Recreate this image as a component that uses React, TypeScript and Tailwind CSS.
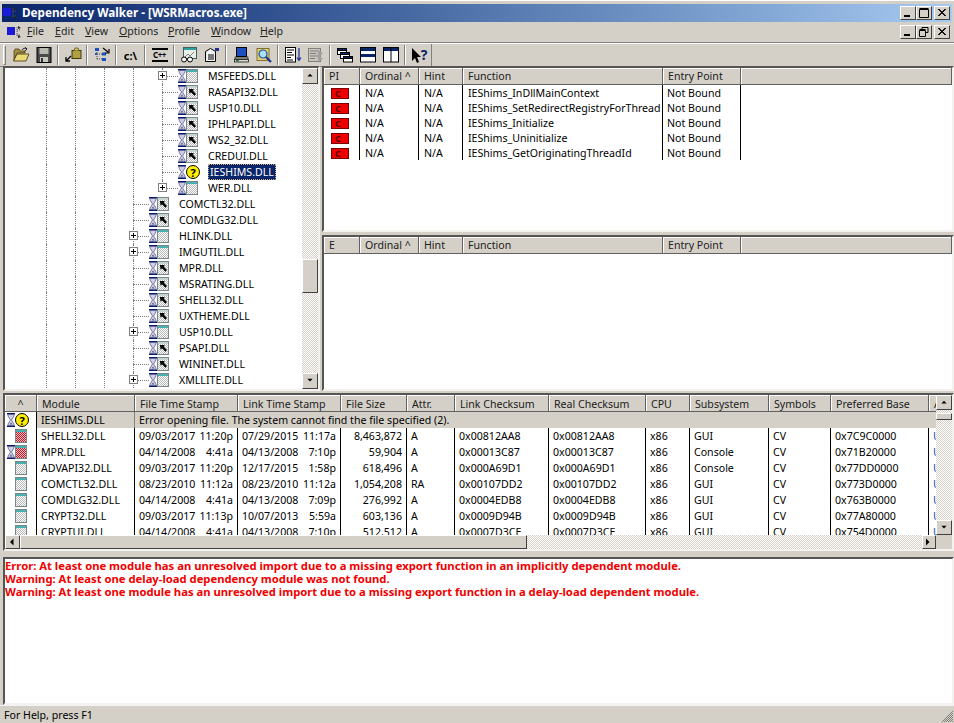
import React from "react";

const FACE = "bg-[#d4d0c8]";
const RAISED = "border border-t-white border-l-white border-r-[#404040] border-b-[#404040] bg-[#d4d0c8]";
const SUNKEN = "border-2 border-t-[#555555] border-l-[#555555] border-r-[#f4f2ee] border-b-[#f4f2ee] bg-white";
const DITHER = "bg-[repeating-conic-gradient(#d4d0c8_0_25%,#ffffff_0_50%)] bg-[length:2px_2px]";

function Hourglass() {
  return (
    <svg width="8" height="14" viewBox="0 0 8 14" className="shrink-0">
      <rect x="0" y="0" width="8" height="1.500" fill="#0a1a6a" />
      <rect x="0" y="12.500" width="8" height="1.500" fill="#0a1a6a" />
      <path d="M1 1.500h6v1.500L4.500 7 7 11v1.500H1V11l2.500-4L1 3z" fill="#d0d0e0" stroke="#4a4a88" strokeWidth="0.700" />
      <path d="M2.500 11.500h3L4 9.500z" fill="#5a5a90" />
    </svg>
  );
}

function ModuleIcon({ kind }: { kind: "plain" | "arrow" | "red" }) {
  const body = kind === "red" ? "url(#dr)" : "url(#dg)";
  return (
    <svg width="12" height="14" viewBox="0 0 12 14" className="shrink-0">
      <defs>
        <pattern id="dg" width="2" height="2" patternUnits="userSpaceOnUse">
          <rect width="2" height="2" fill="#ffffff" />
          <rect width="1" height="1" fill="#b8b8b8" />
          <rect x="1" y="1" width="1" height="1" fill="#b8b8b8" />
        </pattern>
        <pattern id="dr" width="2" height="2" patternUnits="userSpaceOnUse">
          <rect width="2" height="2" fill="#f4c0c0" />
          <rect width="1" height="1" fill="#c01828" />
          <rect x="1" y="1" width="1" height="1" fill="#c01828" />
        </pattern>
      </defs>
      <rect x="0.500" y="0.500" width="11" height="13" fill={body} stroke="#788888" />
      <rect x="1" y="1" width="10" height="2" fill={kind === "arrow" ? "#c8d4d4" : "#48b0b0"} />
      {kind === "arrow" && <path d="M3 4h5L6.700 5.400 10 9l-1.600 1.800L5 7.200 3.500 8.800z" fill="#000" />}
    </svg>
  );
}

function Question() {
  return (
    <span className="w-[14px] h-[14px] shrink-0 rounded-full bg-[#ffee00] border border-black flex items-center justify-center text-[11px] font-bold leading-none text-black">?</span>
  );
}

function Tri({ dir }: { dir: "up" | "down" | "left" | "right" }) {
  const d = { up: "M0.500 4.500 4 1l3.500 3.500z", down: "M0.500 1 4 4.500 7.500 1z", left: "M4.500 0.500 1 4l3.500 3.500z", right: "M1 0.500 4.500 4 1 7.500z" }[dir];
  return (
    <svg width="8" height="8" viewBox="0 0 8 8" className={dir === "up" || dir === "down" ? "h-[6px]" : ""}>
      <path d={d} fill="#000" />
    </svg>
  );
}

function Btn({ dir, cls }: { dir: "up" | "down" | "left" | "right"; cls: string }) {
  return <div className={`${RAISED} ${cls} shrink-0 flex items-center justify-center`}><Tri dir={dir} /></div>;
}

type TreeRow = { name: string; depth: 0 | 1; plus?: boolean; icon: "plain" | "arrow" | "q"; sel?: boolean; last?: boolean };
const tree: TreeRow[] = [
  { name: "MSFEEDS.DLL", depth: 1, plus: true, icon: "plain" },
  { name: "RASAPI32.DLL", depth: 1, icon: "arrow" },
  { name: "USP10.DLL", depth: 1, icon: "arrow" },
  { name: "IPHLPAPI.DLL", depth: 1, icon: "arrow" },
  { name: "WS2_32.DLL", depth: 1, icon: "arrow" },
  { name: "CREDUI.DLL", depth: 1, icon: "arrow" },
  { name: "IESHIMS.DLL", depth: 1, icon: "q", sel: true },
  { name: "WER.DLL", depth: 1, plus: true, icon: "plain", last: true },
  { name: "COMCTL32.DLL", depth: 0, icon: "arrow" },
  { name: "COMDLG32.DLL", depth: 0, icon: "arrow" },
  { name: "HLINK.DLL", depth: 0, plus: true, icon: "plain" },
  { name: "IMGUTIL.DLL", depth: 0, plus: true, icon: "plain" },
  { name: "MPR.DLL", depth: 0, icon: "arrow" },
  { name: "MSRATING.DLL", depth: 0, icon: "arrow" },
  { name: "SHELL32.DLL", depth: 0, icon: "arrow" },
  { name: "UXTHEME.DLL", depth: 0, icon: "arrow" },
  { name: "USP10.DLL", depth: 0, plus: true, icon: "plain" },
  { name: "PSAPI.DLL", depth: 0, icon: "arrow" },
  { name: "WININET.DLL", depth: 0, icon: "arrow" },
  { name: "XMLLITE.DLL", depth: 0, plus: true, icon: "plain" },
];

function Guide() {
  return <div className="w-[29px] h-4 shrink-0 border-l border-dotted border-[#808080]" />;
}

function TreeLine({ r }: { r: TreeRow }) {
  return (
    <div className="h-4 flex items-center pl-[41px] whitespace-nowrap">
      <Guide /><Guide /><Guide />
      {r.depth === 1 && <Guide />}
      <div className="relative w-[16px] h-4 shrink-0">
        <div className={`absolute left-0 top-0 border-l border-dotted border-[#808080] ${r.last ? "h-2" : "h-4"}`} />
        <div className="absolute left-0 top-2 w-[16px] border-t border-dotted border-[#808080]" />
        {r.plus && (
          <div className="absolute left-[-4px] top-[3px] w-[9px] h-[9px] border border-[#808080] bg-white flex items-center justify-center">
            <svg width="7" height="7" viewBox="0 0 7 7"><path d="M1 3.500h5M3.500 1v5" stroke="#000" /></svg>
          </div>
        )}
      </div>
      <Hourglass />
      {r.icon === "q" ? <Question /> : <ModuleIcon kind={r.icon} />}
      <span className={`ml-[8px] px-[2px] h-4 leading-[16px] ${r.sel ? "bg-[#0a246a] text-white outline-1 outline-dotted outline-[#c8b070] outline-offset-[-1px]" : "text-black"}`}>{r.name}</span>
    </div>
  );
}

function HeadCell({ w, lead, children }: { w: string; lead?: string; children?: React.ReactNode }) {
  return (
    <div className={`${w} h-full shrink-0 px-[5px] ${lead ?? "leading-[16px]"} border-r border-b border-[#606060] shadow-[inset_1px_1px_0_#ffffff] overflow-hidden whitespace-nowrap text-[#202020]`}>{children}</div>
  );
}

const W_TOP = ["w-[36px]", "w-[59px]", "w-[44px]", "w-[200px]", "w-[78px]"];
const imports = [
  "IEShims_InDllMainContext",
  "IEShims_SetRedirectRegistryForThread",
  "IEShims_Initialize",
  "IEShims_Uninitialize",
  "IEShims_GetOriginatingThreadId",
];

function FuncHeader({ first }: { first: string }) {
  return (
    <div className={`h-[17px] flex ${FACE}`}>
      <HeadCell w={W_TOP[0]}>{first}</HeadCell>
      <HeadCell w={W_TOP[1]}>{"Ordinal ^"}</HeadCell>
      <HeadCell w={W_TOP[2]}>Hint</HeadCell>
      <HeadCell w={W_TOP[3]}>Function</HeadCell>
      <HeadCell w={W_TOP[4]}>Entry Point</HeadCell>
      <HeadCell w="flex-1" />
    </div>
  );
}

function FuncRow({ fn }: { fn: string }) {
  const c = "h-[15px] shrink-0 border-r border-black px-[5px] leading-[17px] whitespace-nowrap overflow-hidden";
  return (
    <div className="flex h-[15px]">
      <div className={`h-[15px] shrink-0 border-r border-black pl-[7px] pt-[1px] flex items-center ${W_TOP[0]}`}>
        <span className="w-[18px] h-[11px] bg-[#ee0000] border border-[#7a0000] text-[9px] leading-[9px] font-bold text-[#5a0000] pl-[3px] overflow-hidden">C</span>
      </div>
      <div className={`${c} ${W_TOP[1]}`}>N/A</div>
      <div className={`${c} ${W_TOP[2]}`}>N/A</div>
      <div className={`${c} ${W_TOP[3]}`}>{fn}</div>
      <div className={`${c} ${W_TOP[4]} pl-[4px]`}>Not Bound</div>
    </div>
  );
}

const W_MOD = ["w-[32px]", "w-[98px]", "w-[103px]", "w-[103px]", "w-[66px]", "w-[48px]", "w-[94px]", "w-[97px]", "w-[44px]", "w-[79px]", "w-[62px]", "w-[98px]", "w-[7px]"];
const modHead = ["Module", "File Time Stamp", "Link Time Stamp", "File Size", "Attr.", "Link Checksum", "Real Checksum", "CPU", "Subsystem", "Symbols", "Preferred Base", "A"];

type Mod = { hg?: boolean; kind: "plain" | "red"; v: string[] };
const mods: Mod[] = [
  { kind: "red", v: ["SHELL32.DLL", "09/03/2017", "11:20p", "07/29/2015", "11:17a", "8,463,872", "A", "0x00812AA8", "0x00812AA8", "x86", "GUI", "CV", "0x7C9C0000"] },
  { hg: true, kind: "red", v: ["MPR.DLL", "04/14/2008", "4:41a", "04/13/2008", "7:10p", "59,904", "A", "0x00013C87", "0x00013C87", "x86", "Console", "CV", "0x71B20000"] },
  { kind: "plain", v: ["ADVAPI32.DLL", "09/03/2017", "11:20p", "12/17/2015", "1:58p", "618,496", "A", "0x000A69D1", "0x000A69D1", "x86", "Console", "CV", "0x77DD0000"] },
  { kind: "plain", v: ["COMCTL32.DLL", "08/23/2010", "11:12a", "08/23/2010", "11:12a", "1,054,208", "RA", "0x00107DD2", "0x00107DD2", "x86", "GUI", "CV", "0x773D0000"] },
  { kind: "plain", v: ["COMDLG32.DLL", "04/14/2008", "4:41a", "04/13/2008", "7:09p", "276,992", "A", "0x0004EDB8", "0x0004EDB8", "x86", "GUI", "CV", "0x763B0000"] },
  { kind: "plain", v: ["CRYPT32.DLL", "09/03/2017", "11:13p", "10/07/2013", "5:59a", "603,136", "A", "0x0009D94B", "0x0009D94B", "x86", "GUI", "CV", "0x77A80000"] },
  { kind: "plain", v: ["CRYPTUI.DLL", "04/14/2008", "4:41a", "04/13/2008", "7:10p", "512,512", "A", "0x0007D3CE", "0x0007D3CE", "x86", "GUI", "CV", "0x754D0000"] },
];

function ModRow({ m }: { m: Mod }) {
  const c = "h-4 shrink-0 border-r border-black px-[4px] leading-[16px] whitespace-nowrap overflow-hidden";
  const [name, d1, t1, d2, t2, size, attr, lc, rc, cpu, sub, sym, base] = m.v;
  return (
    <div className="flex h-4">
      <div className={`h-4 shrink-0 border-r border-black pl-[2px] flex items-center ${W_MOD[0]}`}>
        <div className="w-[8px] shrink-0">{m.hg && <Hourglass />}</div>
        <ModuleIcon kind={m.kind} />
      </div>
      <div className={`${c} ${W_MOD[1]}`}>{name}</div>
      <div className={`${c} ${W_MOD[2]} flex justify-between`}><span>{d1}</span><span>{t1}</span></div>
      <div className={`${c} ${W_MOD[3]} flex justify-between`}><span>{d2}</span><span>{t2}</span></div>
      <div className={`${c} ${W_MOD[4]} text-right`}>{size}</div>
      <div className={`${c} ${W_MOD[5]}`}>{attr}</div>
      <div className={`${c} ${W_MOD[6]}`}>{lc}</div>
      <div className={`${c} ${W_MOD[7]}`}>{rc}</div>
      <div className={`${c} ${W_MOD[8]}`}>{cpu}</div>
      <div className={`${c} ${W_MOD[9]}`}>{sub}</div>
      <div className={`${c} ${W_MOD[10]}`}>{sym}</div>
      <div className={`${c} ${W_MOD[11]}`}>{base}</div>
      <div className={`h-4 shrink-0 pl-[4px] leading-[16px] overflow-hidden text-[#1a56b0] ${W_MOD[12]}`}>U</div>
    </div>
  );
}

function WinBtn({ children }: { children: React.ReactNode }) {
  return <div className={`w-[16px] h-[14px] ${RAISED} flex items-center justify-center`}>{children}</div>;
}
const MinG = () => <svg width="10" height="10" viewBox="0 0 10 10"><rect x="1" y="7" width="6" height="2" fill="#000" /></svg>;
const MaxG = () => <svg width="10" height="10" viewBox="0 0 10 10"><path d="M0.500 1.500h9v8h-9zM0.500 0.500h9" fill="none" stroke="#000" /></svg>;
const RestG = () => <svg width="10" height="10" viewBox="0 0 10 10"><path d="M3 2.500V0.500h6v5H7M0.500 3.500h6v6h-6zM0.500 2.500h6M2.500 0.500" fill="none" stroke="#000" /></svg>;
const CloseG = () => <svg width="10" height="10" viewBox="0 0 10 10"><path d="M1 1l7 7M2 1l7 7M8 1L1 8M9 1L2 8" stroke="#000" strokeWidth="0.900" /></svg>;

function AppIcon({ cls }: { cls: string }) {
  return (
    <svg width="15" height="14" viewBox="0 0 15 14" className={cls}>
      <rect x="0" y="2" width="8" height="8" fill="#1a1ad8" />
      <path d="M10 2v9M10 5h3M10 10h3" stroke="#555" strokeDasharray="1 1" fill="none" />
      <path d="M11 1l3 2-3 1zM11 10l3 2-3 1z" fill="#222" />
    </svg>
  );
}

const I = ({ children }: { children: React.ReactNode }) => (
  <svg width="18" height="16" viewBox="0 0 18 16">{children}</svg>
);

function TBtn({ children }: { children: React.ReactNode }) {
  return <div className="w-[23px] h-full shrink-0 flex items-center justify-center">{children}</div>;
}
function TSep() {
  return <div className="w-[6px] h-[20px] shrink-0 flex justify-center"><div className="w-[2px] h-full border-l border-l-[#808080] border-r border-r-white" /></div>;
}
function WinIcon({ kind }: { kind: "casc" | "h" | "v" }) {
  return (
    <I>
      {kind === "casc" && (
        <g stroke="#000" fill="#fff">
          <rect x="1.500" y="1.500" width="9" height="6" />
          <rect x="4.500" y="5.500" width="9" height="6" />
          <rect x="7.500" y="9.500" width="9" height="5.500" />
          <rect x="1.500" y="1.500" width="9" height="2" fill="#0a246a" />
          <rect x="4.500" y="5.500" width="9" height="2" fill="#0a246a" />
          <rect x="7.500" y="9.500" width="9" height="2" fill="#0a246a" />
        </g>
      )}
      {kind === "h" && (
        <g>
          <rect x="1.500" y="0.500" width="15" height="14.500" fill="#fff" stroke="#000" />
          <rect x="2" y="1" width="14" height="3" fill="#0a246a" />
          <rect x="2" y="7" width="14" height="3" fill="#0a246a" />
        </g>
      )}
      {kind === "v" && (
        <g>
          <rect x="1.500" y="0.500" width="15" height="14.500" fill="#fff" stroke="#000" />
          <rect x="2" y="1" width="14" height="3" fill="#0a246a" />
          <path d="M9 1v14" stroke="#000" />
        </g>
      )}
    </I>
  );
}

function Toolbar() {
  return (
    <div className="flex items-center h-[23px] w-[432px] pl-[3px] border-r border-b border-r-[#808080] border-b-[#808080]">
      <div className="w-[3px] h-[20px] shrink-0 border-l border-t border-white border-r border-b border-r-[#808080] border-b-[#808080]" />
      <div className="w-[3px] shrink-0" />
      <TBtn>
        <I>
          <path d="M2 4l1-2h4l1 2h5v2H5L2 13z" fill="#a89040" stroke="#403000" strokeWidth="0.700" />
          <path d="M5 7h12l-3 7H1.500z" fill="#e8d878" stroke="#403000" strokeWidth="0.800" />
          <path d="M10 3c1-2 3-2 5-1M13 0l2 2-2 2" stroke="#000" fill="none" strokeWidth="0.800" />
        </I>
      </TBtn>
      <TBtn>
        <I>
          <rect x="2" y="0.500" width="14" height="15" fill="#4a4a4a" stroke="#000" />
          <rect x="4.500" y="1" width="9" height="6" fill="#b8b8b0" />
          <rect x="5" y="10" width="8" height="5" fill="#c8c8c0" />
          <rect x="6" y="11" width="2" height="4" fill="#333" />
        </I>
      </TBtn>
      <TSep />
      <TBtn>
        <I>
          <rect x="8" y="3.500" width="9" height="8" fill="#b0a040" stroke="#403810" />
          <path d="M10 3.500l1-2.500h3l1 2.500" fill="#d8c860" stroke="#403810" strokeWidth="0.700" />
          <path d="M7 9L2 14M2 10v4h4" stroke="#000" fill="none" strokeWidth="1.300" />
        </I>
      </TBtn>
      <TSep />
      <TBtn>
        <I>
          <path d="M4 3v10M4 7h5M4 12h5" stroke="#444" strokeDasharray="1 1" fill="none" />
          <rect x="2" y="1" width="4" height="3" fill="#1c50c0" />
          <rect x="9" y="5.500" width="4" height="3" fill="#1c50c0" />
          <rect x="2" y="6" width="2" height="2" fill="#1c50c0" />
          <rect x="9" y="11" width="4" height="3" fill="#1c50c0" />
          <path d="M10 1l5 4M16 2v4h-4" stroke="#000" fill="none" strokeWidth="1.200" />
        </I>
      </TBtn>
      <TSep />
      <TBtn><span className="font-['DejaVu_Sans',sans-serif] font-bold text-[11px] text-black leading-none">c:\</span></TBtn>
      <TSep />
      <TBtn>
        <span className="w-[16px] border-t-2 border-b-2 border-black text-[8px] leading-[10px] font-bold text-center text-black font-['Liberation_Serif',serif] tracking-[-0.5px]">C++</span>
      </TBtn>
      <TSep />
      <TBtn>
        <I>
          <rect x="3.500" y="0.500" width="13" height="11" fill="#e8f0e8" stroke="#406060" />
          <rect x="4" y="1" width="12" height="2" fill="#30a0a0" />
          <path d="M5 10l3-3 2 2 4-4" stroke="#808080" fill="none" />
          <circle cx="4" cy="12.500" r="2.500" fill="#fff" stroke="#000" />
          <circle cx="10" cy="12.500" r="2.500" fill="#fff" stroke="#000" />
          <path d="M6.500 12.500h1" stroke="#000" />
        </I>
      </TBtn>
      <TBtn>
        <I>
          <path d="M2.500 4.500l5-3 5 3v10h-10z" fill="#f0f0f0" stroke="#000" />
          <path d="M5 8h6M5 10h6M5 12h6" stroke="#000" />
          <path d="M12 1h4v3h-4z" fill="#1c3090" />
        </I>
      </TBtn>
      <TSep />
      <TBtn>
        <I>
          <rect x="4.500" y="0.500" width="10" height="9" fill="#1c50c0" stroke="#000" />
          <rect x="3" y="10" width="13" height="2" fill="#b0b0a8" stroke="#000" strokeWidth="0.600" />
          <rect x="2.500" y="12.500" width="14" height="2.500" fill="#d8d8c8" stroke="#000" strokeWidth="0.700" />
          <rect x="4" y="13" width="3" height="1.500" fill="#208040" />
        </I>
      </TBtn>
      <TBtn>
        <I>
          <rect x="2" y="1.500" width="12" height="12" fill="#e8d070" stroke="#807030" />
          <circle cx="8" cy="7" r="4" fill="#a8e0f8" stroke="#1c50a0" strokeWidth="1.200" />
          <path d="M11 10l5 5" stroke="#1c3090" strokeWidth="2.200" />
        </I>
      </TBtn>
      <TSep />
      <TBtn>
        <I>
          <rect x="1.500" y="0.500" width="10" height="14.500" fill="#fff" stroke="#000" />
          <path d="M3 3h7M3 5.500h5M3 8h7M3 10.500h4M3 13h6" stroke="#000" />
          <path d="M15 1v12M13 10.500l2 3 2-3" stroke="#1c3090" fill="none" strokeWidth="1.200" />
        </I>
      </TBtn>
      <TBtn>
        <I>
          <rect x="1.500" y="1.500" width="12" height="13" fill="#c8c4bc" stroke="#808080" />
          <path d="M3 4h8M3 6.500h6M3 9h8M3 11.500h5" stroke="#808080" />
          <path d="M11 3l5 3-3 3 3 3-5 2z" fill="#a0a0a0" />
        </I>
      </TBtn>
      <TSep />
      <TBtn><WinIcon kind="casc" /></TBtn>
      <TBtn><WinIcon kind="h" /></TBtn>
      <TBtn><WinIcon kind="v" /></TBtn>
      <TSep />
      <TBtn>
        <div className="flex items-center">
          <svg width="9" height="15" viewBox="0 0 9 15"><path d="M0 0v13l3-3 2 5 2-1-2-5h4z" fill="#000" /></svg>
          <span className="font-['DejaVu_Sans',sans-serif] font-bold text-[14px] leading-none text-[#0a246a]">?</span>
        </div>
      </TBtn>
    </div>
  );
}

const menu = [
  ["F", "ile", "w-[28px]"],
  ["E", "dit", "w-[30px]"],
  ["V", "iew", "w-[34px]"],
  ["O", "ptions", "w-[49px]"],
  ["P", "rofile", "w-[43px]"],
  ["W", "indow", "w-[49px]"],
  ["H", "elp", "w-[40px]"],
];

export default function App() {
  return (
    <div className={`w-[954px] h-[723px] overflow-hidden flex flex-col ${FACE} font-['Noto_Sans','DejaVu_Sans',sans-serif] text-[10.6px] text-black`}>
      <div className="h-[4px] shrink-0 border-t border-white" />

      <div className="h-[18px] shrink-0 mx-[2px] flex items-center bg-gradient-to-r from-[#0a246a] to-[#a6caf0]">
        <AppIcon cls="ml-[1px] shrink-0" />
        <span className="ml-[4px] font-bold text-[11.7px] text-white whitespace-nowrap">Dependency Walker - [WSRMacros.exe]</span>
        <div className="ml-auto flex mr-[2px]">
          <WinBtn><MinG /></WinBtn>
          <WinBtn><MaxG /></WinBtn>
          <div className="w-[2px]" />
          <WinBtn><CloseG /></WinBtn>
        </div>
      </div>

      <div className="h-[21px] shrink-0 flex items-center border-b border-[#808080] pl-[7px]">
        <AppIcon cls="shrink-0 mr-[5px]" />
        {menu.map(([u, rest, w]) => (
          <span key={u} className={`${w} shrink-0 text-[#222222]`}><span className="underline">{u}</span>{rest}</span>
        ))}
        <div className="ml-auto flex mr-[4px]">
          <WinBtn><MinG /></WinBtn>
          <WinBtn><RestG /></WinBtn>
          <div className="w-[2px]" />
          <WinBtn><CloseG /></WinBtn>
        </div>
      </div>

      <div className="h-[23px] shrink-0 border-t border-white"><Toolbar /></div>

      <div className="h-[325px] shrink-0 flex pl-[3px]">
        <div className={`w-[317px] shrink-0 flex ${SUNKEN}`}>
          <div className="flex-1 min-w-0 overflow-hidden">
            {tree.map((r, i) => <TreeLine key={i} r={r} />)}
          </div>
          <div className={`w-[16px] shrink-0 flex flex-col ${DITHER}`}>
            <Btn dir="up" cls="h-[16px]" />
            <div className="h-[175px] shrink-0" />
            <div className={`h-[34px] shrink-0 ${RAISED}`} />
            <div className="flex-1" />
            <Btn dir="down" cls="h-[16px]" />
          </div>
        </div>
        <div className="w-[632px] ml-[2px] flex flex-col">
          <div className={`h-[166px] shrink-0 overflow-hidden ${SUNKEN}`}>
            <FuncHeader first="PI" />
            <div>{imports.map((f) => <FuncRow key={f} fn={f} />)}</div>
          </div>
          <div className={`h-[156px] mt-[3px] shrink-0 overflow-hidden ${SUNKEN}`}>
            <FuncHeader first="E" />
          </div>
        </div>
      </div>

      <div className={`h-[158px] mt-[2px] ml-[3px] w-[951px] shrink-0 flex flex-col ${SUNKEN}`}>
        <div className="h-[140px] shrink-0 flex">
          <div className="flex-1 min-w-0 overflow-hidden">
            <div className={`h-[17px] flex ${FACE}`}>
              <div className={`${W_MOD[0]} h-full shrink-0 text-center leading-[18px] border-r border-b border-[#606060] shadow-[inset_1px_1px_0_#ffffff] text-[#202020]`}>^</div>
              {modHead.map((h, i) => (
                <HeadCell key={h} w={W_MOD[i + 1]} lead="leading-[18px]">{h}</HeadCell>
              ))}
            </div>
            <div className={`h-4 flex ${FACE}`}>
              <div className={`h-4 shrink-0 pl-[2px] flex items-center bg-white border-r border-black ${W_MOD[0]}`}>
                <Hourglass />
                <Question />
              </div>
              <div className={`h-4 shrink-0 px-[4px] leading-[16px] border-r border-[#808080] ${W_MOD[1]}`}>IESHIMS.DLL</div>
              <div className="h-4 flex-1 px-[4px] leading-[16px] whitespace-nowrap">Error opening file. The system cannot find the file specified (2).</div>
            </div>
            {mods.map((m) => <ModRow key={m.v[0]} m={m} />)}
          </div>
          <div className={`w-[16px] shrink-0 flex flex-col ${DITHER}`}>
            <Btn dir="up" cls="h-[15px]" />
            <div className="h-[3px] shrink-0" />
            <div className={`h-[7px] shrink-0 ${RAISED}`} />
            <div className="flex-1" />
            <Btn dir="down" cls="h-[15px]" />
          </div>
        </div>
        <div className={`h-[14px] shrink-0 flex ${FACE}`}>
          <div className={`flex-1 flex ${DITHER}`}>
            <Btn dir="left" cls="w-[15px]" />
            <div className={`w-[507px] shrink-0 ${RAISED}`} />
            <div className="flex-1" />
            <Btn dir="right" cls="w-[14px]" />
          </div>
          <div className="w-[16px] shrink-0" />
        </div>
      </div>

      <div className={`h-[148px] mt-[6px] ml-[3px] w-[951px] shrink-0 font-bold text-[11.25px] text-[#f00000] leading-[13px] whitespace-nowrap overflow-hidden ${SUNKEN}`}>
        <div>Error: At least one module has an unresolved import due to a missing export function in an implicitly dependent module.</div>
        <div>Warning: At least one delay-load dependency module was not found.</div>
        <div>Warning: At least one module has an unresolved import due to a missing export function in a delay-load dependent module.</div>
      </div>

      <div className="flex-1 min-h-0 flex items-center pl-[4px] pt-[2px] relative border-t border-[#f4f2ee]">
        <span>For Help, press F1</span>
        <svg width="13" height="13" viewBox="0 0 13 13" className="absolute right-0 bottom-0">
          <path d="M12 1L1 12M12 3L3 12M12 5L5 12M12 7L7 12M12 9L9 12M12 11L11 12" stroke="#808080" fill="none" />
        </svg>
      </div>
    </div>
  );
}
